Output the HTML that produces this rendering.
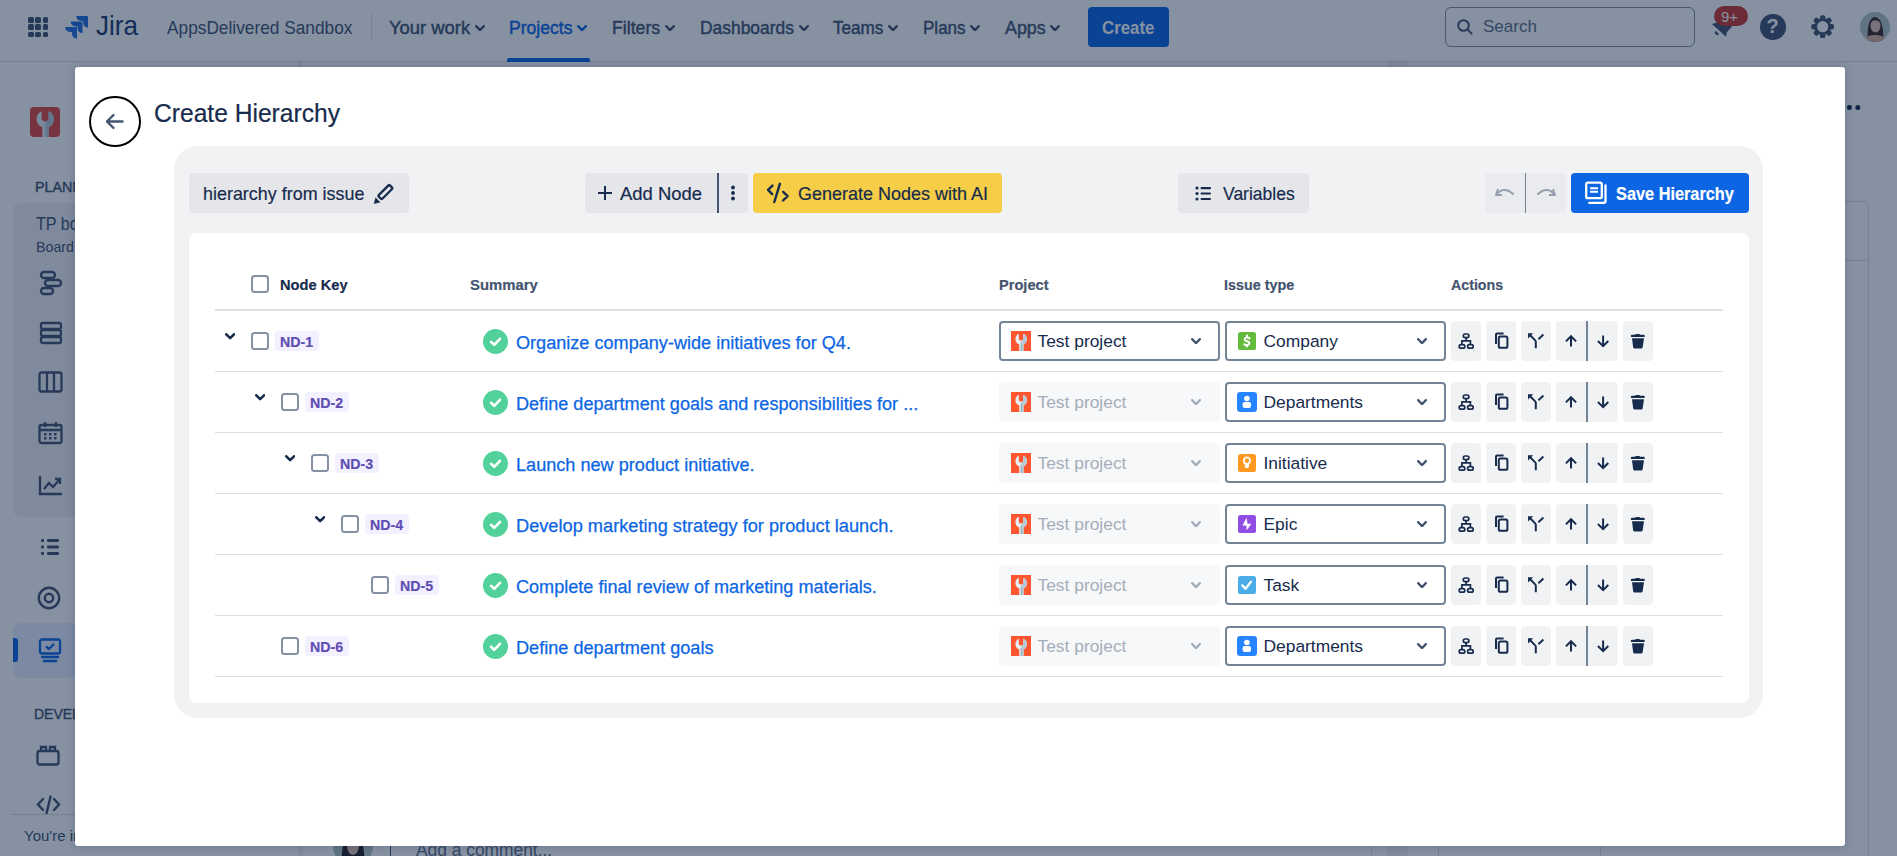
<!DOCTYPE html><html><head><meta charset="utf-8"><style>
html,body{margin:0;padding:0;width:1897px;height:856px;overflow:hidden;background:#fff;font-family:"Liberation Sans",sans-serif;}
.t{position:absolute;white-space:nowrap;line-height:1;transform-origin:0 0;-webkit-text-stroke-width:0.2px;}
.r{position:absolute;display:block;}
#bgp .t{-webkit-text-stroke-width:0;}
#ov{position:absolute;left:0;top:0;width:1897px;height:856px;background:rgba(9,30,66,0.49);}
</style></head><body>
<div id="bgp"><div class="r" style="left:0px;top:0px;width:1897px;height:61px;background:#ffffff;"></div>
<div class="r" style="left:0px;top:61px;width:1897px;height:1px;background:#dcdfe4;"></div>
<div class="r" style="left:28.0px;top:17.0px;width:5.5px;height:5.5px;background:#44546f;border-radius:1.5px;"></div>
<div class="r" style="left:28.0px;top:24.3px;width:5.5px;height:5.5px;background:#44546f;border-radius:1.5px;"></div>
<div class="r" style="left:28.0px;top:31.6px;width:5.5px;height:5.5px;background:#44546f;border-radius:1.5px;"></div>
<div class="r" style="left:35.3px;top:17.0px;width:5.5px;height:5.5px;background:#44546f;border-radius:1.5px;"></div>
<div class="r" style="left:35.3px;top:24.3px;width:5.5px;height:5.5px;background:#44546f;border-radius:1.5px;"></div>
<div class="r" style="left:35.3px;top:31.6px;width:5.5px;height:5.5px;background:#44546f;border-radius:1.5px;"></div>
<div class="r" style="left:42.6px;top:17.0px;width:5.5px;height:5.5px;background:#44546f;border-radius:1.5px;"></div>
<div class="r" style="left:42.6px;top:24.3px;width:5.5px;height:5.5px;background:#44546f;border-radius:1.5px;"></div>
<div class="r" style="left:42.6px;top:31.6px;width:5.5px;height:5.5px;background:#44546f;border-radius:1.5px;"></div>
<svg class="r" style="left:64.3px;top:15.2px;" width="25.5" height="25.5" viewBox="0 0 24 24"><path d="M22 1 H11.5 a4.6 4.6 0 0 0 4.6 4.6 h1.9 v1.8 a4.6 4.6 0 0 0 4.6 4.6 V2 a1 1 0 0 0 -0.6 -1z" fill="#2470e0"/>
<path d="M16.8 6.2 H6.3 a4.6 4.6 0 0 0 4.6 4.6 h1.9 v1.8 a4.6 4.6 0 0 0 4.6 4.6 V7.2 a1 1 0 0 0 -0.6 -1z" fill="#2470e0"/>
<path d="M11.6 11.4 H1.1 a4.6 4.6 0 0 0 4.6 4.6 h1.9 v1.8 a4.6 4.6 0 0 0 4.6 4.6 V12.4 a1 1 0 0 0 -0.6 -1z" fill="#2470e0"/></svg>
<div class="t" style="left:96px;top:12.30px;font-size:28px;color:#1e3a6e;transform:scaleX(0.93);">Jira</div>
<div class="t" style="left:167.13609953635776px;top:18.12px;font-size:19px;color:#44546f;transform:scaleX(0.9094);">AppsDelivered Sandbox</div>
<div class="r" style="left:371px;top:14px;width:1px;height:25px;background:#dcdfe4;"></div>
<div class="t" style="left:389.0796434628848px;top:18.12px;font-size:19px;color:#44546f;transform:scaleX(0.9688);-webkit-text-stroke:0.45px #44546f;">Your work</div>
<svg class="r" style="left:474.8px;top:24.7px;" width="10" height="6.6" viewBox="0 0 10 6.6"><path d="M1.25 1.25 L5.0 5.1 L8.75 1.25" fill="none" stroke="#44546f" stroke-width="2.5" stroke-linecap="round" stroke-linejoin="round"/></svg>
<div class="t" style="left:509.1224151277231px;top:18.12px;font-size:19px;color:#0c66e4;transform:scaleX(0.9238);-webkit-text-stroke:0.45px #0c66e4;">Projects</div>
<svg class="r" style="left:577px;top:24.7px;" width="10" height="6.6" viewBox="0 0 10 6.6"><path d="M1.25 1.25 L5.0 5.1 L8.75 1.25" fill="none" stroke="#0c66e4" stroke-width="2.5" stroke-linecap="round" stroke-linejoin="round"/></svg>
<div class="t" style="left:612.1143963809468px;top:18.12px;font-size:19px;color:#44546f;transform:scaleX(0.9322);-webkit-text-stroke:0.45px #44546f;">Filters</div>
<svg class="r" style="left:665px;top:24.7px;" width="10" height="6.6" viewBox="0 0 10 6.6"><path d="M1.25 1.25 L5.0 5.1 L8.75 1.25" fill="none" stroke="#44546f" stroke-width="2.5" stroke-linecap="round" stroke-linejoin="round"/></svg>
<div class="t" style="left:699.9293733547067px;top:18.12px;font-size:19px;color:#44546f;transform:scaleX(0.9164);-webkit-text-stroke:0.45px #44546f;">Dashboards</div>
<svg class="r" style="left:798.5px;top:24.7px;" width="10" height="6.6" viewBox="0 0 10 6.6"><path d="M1.25 1.25 L5.0 5.1 L8.75 1.25" fill="none" stroke="#44546f" stroke-width="2.5" stroke-linecap="round" stroke-linejoin="round"/></svg>
<div class="t" style="left:833.1449682362244px;top:18.12px;font-size:19px;color:#44546f;transform:scaleX(0.9);-webkit-text-stroke:0.45px #44546f;">Teams</div>
<svg class="r" style="left:888px;top:24.7px;" width="10" height="6.6" viewBox="0 0 10 6.6"><path d="M1.25 1.25 L5.0 5.1 L8.75 1.25" fill="none" stroke="#44546f" stroke-width="2.5" stroke-linecap="round" stroke-linejoin="round"/></svg>
<div class="t" style="left:922.9493095883339px;top:18.12px;font-size:19px;color:#44546f;transform:scaleX(0.8955);-webkit-text-stroke:0.45px #44546f;">Plans</div>
<svg class="r" style="left:970px;top:24.7px;" width="10" height="6.6" viewBox="0 0 10 6.6"><path d="M1.25 1.25 L5.0 5.1 L8.75 1.25" fill="none" stroke="#44546f" stroke-width="2.5" stroke-linecap="round" stroke-linejoin="round"/></svg>
<div class="t" style="left:1004.8065643648764px;top:18.12px;font-size:19px;color:#44546f;transform:scaleX(0.9405);-webkit-text-stroke:0.45px #44546f;">Apps</div>
<svg class="r" style="left:1050px;top:24.7px;" width="10" height="6.6" viewBox="0 0 10 6.6"><path d="M1.25 1.25 L5.0 5.1 L8.75 1.25" fill="none" stroke="#44546f" stroke-width="2.5" stroke-linecap="round" stroke-linejoin="round"/></svg>
<div class="r" style="left:507px;top:58px;width:83px;height:4px;background:#0c66e4;border-radius:2px 2px 0 0;"></div>
<div class="r" style="left:1088px;top:7px;width:81px;height:40px;background:#0c66e4;border-radius:4px;"></div>
<div class="t" style="left:1102.1592179490483px;top:17.92px;font-size:19px;color:#ffffff;font-weight:700;transform:scaleX(0.885);">Create</div>
<div class="r" style="left:1445px;top:7px;width:250px;height:40px;background:#ffffff;border:1.5px solid #8590a2;border-radius:6px;box-sizing:border-box;"></div>
<svg class="r" style="left:1457px;top:19px;" width="16" height="16" viewBox="0 0 16 16"><circle cx="6.5" cy="6.5" r="5.3" fill="none" stroke="#44546f" stroke-width="2"/><path d="M10.5 10.5 L14.6 14.6" stroke="#44546f" stroke-width="2" stroke-linecap="round"/></svg>
<div class="t" style="left:1483px;top:17.51px;font-size:17px;color:#626f86;">Search</div>
<svg class="r" style="left:1708px;top:10px;" width="30" height="32" viewBox="0 0 30 32"><g transform="rotate(42 15 16)"><path d="M15 4 C9.5 4 8 8.5 8 12 V18 L5.5 22 H24.5 L22 18 V12 C22 8.5 20.5 4 15 4z" fill="#44546f"/><path d="M12.5 24.5 a2.5 2.5 0 0 0 5 0z" fill="#44546f"/></g></svg>
<div class="r" style="left:1714px;top:6px;width:34px;height:20px;background:#c9372c;border-radius:10px;"></div>
<div class="t" style="left:1721px;top:9.30px;font-size:15px;color:#ffffff;">9+</div>
<div class="r" style="left:1760px;top:14px;width:25.5px;height:25.5px;background:#44546f;border-radius:50%;"></div>
<div class="t" style="left:1766.5px;top:16.07px;font-size:20px;color:#ffffff;font-weight:700;">?</div>
<svg class="r" style="left:1811px;top:15px;" width="23.4" height="23.4" viewBox="0 0 23.4 23.4"><rect x="9" y="0.3" width="5.4" height="6" rx="2.2" fill="#44546f" transform="rotate(0 11.7 11.7)"/><rect x="9" y="0.3" width="5.4" height="6" rx="2.2" fill="#44546f" transform="rotate(45 11.7 11.7)"/><rect x="9" y="0.3" width="5.4" height="6" rx="2.2" fill="#44546f" transform="rotate(90 11.7 11.7)"/><rect x="9" y="0.3" width="5.4" height="6" rx="2.2" fill="#44546f" transform="rotate(135 11.7 11.7)"/><rect x="9" y="0.3" width="5.4" height="6" rx="2.2" fill="#44546f" transform="rotate(180 11.7 11.7)"/><rect x="9" y="0.3" width="5.4" height="6" rx="2.2" fill="#44546f" transform="rotate(225 11.7 11.7)"/><rect x="9" y="0.3" width="5.4" height="6" rx="2.2" fill="#44546f" transform="rotate(270 11.7 11.7)"/><rect x="9" y="0.3" width="5.4" height="6" rx="2.2" fill="#44546f" transform="rotate(315 11.7 11.7)"/><circle cx="11.7" cy="11.7" r="8.1" fill="#44546f"/><circle cx="11.7" cy="11.7" r="5.6" fill="#fff"/></svg>
<svg class="r" style="left:1860px;top:12px;" width="30" height="30" viewBox="0 0 30 30"><defs><clipPath id="av"><circle cx="15" cy="15" r="15"/></clipPath></defs><g clip-path="url(#av)"><rect width="30" height="30" fill="#b5c7c4"/><path d="M8 30 C7 18 8 6 15 5 C22 6 24 18 23 30z" fill="#3b2a26"/><ellipse cx="15.5" cy="14" rx="5" ry="6.5" fill="#e8c3b0"/><path d="M4 30 C6 24 10 23 15 23 C20 23 25 24 27 30z" fill="#dcae98"/><path d="M10 10 C12 5 19 5 21 10 C19 8 12 8 10 10z" fill="#3b2a26"/></g></svg>
<div class="r" style="left:299px;top:62px;width:4px;height:800px;background:#f1f2f4;"></div>
<div class="r" style="left:298px;top:62px;width:1px;height:800px;background:#ebecf0;"></div>
<svg class="r" style="left:30px;top:107px;" width="30" height="30" viewBox="0 0 20 20"><defs><clipPath id="sbw"><rect x="0" y="0" width="20" height="20" rx="2.7"/></clipPath><clipPath id="sbr"><rect x="10.2" y="0" width="10" height="20"/></clipPath></defs><g clip-path="url(#sbw)"><rect width="20" height="20" fill="#e2483d"/><path d="M7.8 2.8 C5.4 3.8 4.4 6 4.4 8.2 C4.4 10.8 6.1 12.6 8.2 13.5 V20 H12.5 V13.5 C14.6 12.6 15.9 10.8 15.9 8.2 C15.9 6 14.9 3.8 12.4 2.8 V8.6 L10.1 9.8 L7.8 8.6 Z" fill="#e6f0f4"/><path d="M7.8 2.8 C5.4 3.8 4.4 6 4.4 8.2 C4.4 10.8 6.1 12.6 8.2 13.5 V20 H12.5 V13.5 C14.6 12.6 15.9 10.8 15.9 8.2 C15.9 6 14.9 3.8 12.4 2.8 V8.6 L10.1 9.8 L7.8 8.6 Z" fill="#b6cad5" clip-path="url(#sbr)"/></g></svg>
<div class="t" style="left:34.5px;top:178.88px;font-size:15.5px;color:#44546f;transform:scaleX(0.92);-webkit-text-stroke:0.4px #44546f;">PLANNING</div>
<div class="r" style="left:13px;top:203px;width:300px;height:314px;background:#f1f2f4;border-radius:8px;"></div>
<div class="t" style="left:35.5px;top:215.34px;font-size:18.5px;color:#44546f;transform:scaleX(0.87);">TP board</div>
<div class="t" style="left:35.5px;top:239.00px;font-size:15px;color:#44546f;transform:scaleX(0.95);">Board</div>
<svg class="r" style="left:39px;top:270px;" width="24" height="26" viewBox="0 0 24 26"><rect x="2" y="2" width="14" height="6" rx="3" fill="none" stroke="#44546f" stroke-width="2.3"/><rect x="6" y="10" width="16" height="6" rx="3" fill="none" stroke="#44546f" stroke-width="2.3"/><rect x="2" y="18" width="12" height="6" rx="3" fill="none" stroke="#44546f" stroke-width="2.3"/></svg>
<svg class="r" style="left:39px;top:321px;" width="24" height="24" viewBox="0 0 24 24"><rect x="2" y="2" width="20" height="6" rx="2" fill="none" stroke="#44546f" stroke-width="2.3"/><rect x="2" y="9" width="20" height="6" rx="2" fill="none" stroke="#44546f" stroke-width="2.3"/><rect x="2" y="16" width="20" height="6" rx="2" fill="none" stroke="#44546f" stroke-width="2.3"/></svg>
<svg class="r" style="left:38px;top:371px;" width="25" height="22" viewBox="0 0 25 22"><rect x="1.5" y="1.5" width="22" height="19" rx="2" fill="none" stroke="#44546f" stroke-width="2.3"/><path d="M9 2 v18 M16 2 v18" stroke="#44546f" stroke-width="2.3"/></svg>
<svg class="r" style="left:38px;top:421px;" width="25" height="24" viewBox="0 0 25 24"><rect x="1.5" y="4" width="22" height="18" rx="2" fill="none" stroke="#44546f" stroke-width="2.3"/><path d="M1.5 9 h22 M7 1 v5 M18 1 v5" stroke="#44546f" stroke-width="2.3"/><g fill="#44546f"><rect x="6" y="12" width="2.5" height="2.5"/><rect x="11" y="12" width="2.5" height="2.5"/><rect x="16" y="12" width="2.5" height="2.5"/><rect x="6" y="16" width="2.5" height="2.5"/><rect x="11" y="16" width="2.5" height="2.5"/><rect x="16" y="16" width="2.5" height="2.5"/></g></svg>
<svg class="r" style="left:38px;top:474px;" width="26" height="22" viewBox="0 0 26 22"><path d="M2 2 v18 h22" fill="none" stroke="#44546f" stroke-width="2.3"/><path d="M6 15 l5 -6 l4 4 l7 -8 M17 5 h5 v5" fill="none" stroke="#44546f" stroke-width="2.3"/></svg>
<svg class="r" style="left:40px;top:538px;" width="20" height="18" viewBox="0 0 20 18"><g fill="#44546f"><rect x="1" y="1" width="3" height="3" rx="1"/><rect x="1" y="7.5" width="3" height="3" rx="1"/><rect x="1" y="14" width="3" height="3" rx="1"/><rect x="7" y="1" width="12" height="3" rx="1.2"/><rect x="7" y="7.5" width="12" height="3" rx="1.2"/><rect x="7" y="14" width="12" height="3" rx="1.2"/></g></svg>
<svg class="r" style="left:37px;top:586px;" width="24" height="24" viewBox="0 0 24 24"><circle cx="12" cy="12" r="10.2" fill="none" stroke="#44546f" stroke-width="2.4"/><circle cx="12" cy="12" r="4.2" fill="none" stroke="#44546f" stroke-width="2.4"/></svg>
<div class="r" style="left:13px;top:623px;width:300px;height:55px;background:#e9f2ff;border-radius:8px;"></div>
<div class="r" style="left:13px;top:638px;width:5px;height:24px;background:#0c66e4;border-radius:0 3px 3px 0;"></div>
<svg class="r" style="left:38px;top:638px;" width="24" height="25" viewBox="0 0 24 25"><rect x="2" y="1.5" width="20" height="14" rx="2" fill="none" stroke="#0c66e4" stroke-width="2.3"/><path d="M8 8.5 l3 2.5 l5 -5" fill="none" stroke="#0c66e4" stroke-width="2.3"/><path d="M3 19 h18 M5 23 h14" stroke="#0c66e4" stroke-width="2.3"/></svg>
<div class="t" style="left:33.5px;top:705.88px;font-size:15.5px;color:#44546f;transform:scaleX(0.9);-webkit-text-stroke:0.4px #44546f;">DEVELOPMENT</div>
<svg class="r" style="left:36px;top:745px;" width="24" height="21" viewBox="0 0 24 21"><rect x="1.5" y="6" width="21" height="13.5" rx="2" fill="none" stroke="#44546f" stroke-width="2.3"/><path d="M5 6 v-4 h5 v4 M14 6 v-4 h5 v4" fill="none" stroke="#44546f" stroke-width="2.3"/></svg>
<svg class="r" style="left:36px;top:795px;" width="25" height="20" viewBox="0 0 25 20"><path d="M7 4 L2 9.5 L7 15 M18 4 L23 9.5 L18 15 M14.5 1.5 L10.5 18.5" fill="none" stroke="#44546f" stroke-width="2.4" stroke-linecap="round"/></svg>
<div class="r" style="left:10px;top:814px;width:290px;height:1px;background:#dcdfe4;"></div>
<div class="t" style="left:24px;top:828.30px;font-size:15px;color:#44546f;">You're in a team-managed project</div>
<div class="r" style="left:1387px;top:62px;width:21px;height:800px;background:#f1f2f4;"></div>
<div class="r" style="left:1371px;top:830px;width:1px;height:30px;background:#dcdfe4;"></div>
<div class="r" style="left:1438px;top:830px;width:1px;height:30px;background:#dcdfe4;"></div>
<svg class="r" style="left:1836px;top:103px;" width="26" height="9" viewBox="0 0 26 9"><circle cx="5" cy="4.5" r="2.5" fill="#172b4d"/><circle cx="13.4" cy="4.5" r="2.5" fill="#172b4d"/><circle cx="21.8" cy="4.5" r="2.5" fill="#172b4d"/></svg>
<div class="r" style="left:1600px;top:201px;width:269px;height:700px;background:#ffffff;border:1px solid #dcdfe4;border-radius:4px;box-sizing:border-box;"></div>
<div class="r" style="left:1600px;top:260px;width:269px;height:1px;background:#dcdfe4;"></div>
<svg class="r" style="left:333px;top:826px;" width="40" height="40" viewBox="0 0 40 40"><defs><clipPath id="av2"><circle cx="20" cy="20" r="20"/></clipPath></defs><g clip-path="url(#av2)"><rect width="40" height="40" fill="#b5c7c4"/><path d="M9 40 C8 25 10 8 20 7 C30 8 32 25 31 40z" fill="#2a2024"/><ellipse cx="20" cy="20" rx="6" ry="9" fill="#e2c0b0"/></g></svg>
<div class="r" style="left:390px;top:830px;width:1px;height:30px;background:#44546f;"></div>
<div class="t" style="left:415.73111088729985px;top:840.76px;font-size:18px;color:#626f86;transform:scaleX(0.9654);">Add a comment...</div>
</div><div id="ov"></div>
<div class="r" style="left:75px;top:67px;width:1770px;height:779px;background:#ffffff;border-radius:3px;box-shadow:0 0 9px rgba(9,30,66,0.22);"></div>
<div class="r" style="left:89px;top:95.8px;width:51.6px;height:51.6px;background:transparent;border:2px solid #000;border-radius:50%;box-sizing:border-box;"></div>
<svg class="r" style="left:104px;top:112px;" width="21" height="19" viewBox="0 0 21 19"><path d="M18.5 9.5 H3 M9.5 3 L3 9.5 L9.5 16" fill="none" stroke="#44546f" stroke-width="2.4" stroke-linecap="round" stroke-linejoin="round"/></svg>
<div class="t" style="left:154.4697836465635px;top:99.99px;font-size:26px;color:#172b4d;transform:scaleX(0.9463);">Create Hierarchy</div>
<div class="r" style="left:174px;top:146px;width:1589px;height:572px;background:#f1f2f4;border-radius:24px;"></div>
<div class="r" style="left:189px;top:173px;width:220px;height:40px;background:#e4e6ea;border-radius:4px;"></div>
<div class="t" style="left:203.10346095589975px;top:183.92px;font-size:19px;color:#172b4d;transform:scaleX(0.9437);">hierarchy from issue</div>
<svg class="r" style="left:365px;top:176px;" width="40" height="34" viewBox="0 0 40 34"><rect x="12.5" y="13.55" width="15.8" height="5.1" rx="1" fill="none" stroke="#172b4d" stroke-width="2.3" transform="rotate(-45 20.4 16.1)"/><path d="M9.1 27.6 L10.6 21.8 L15 26.2z" fill="#172b4d" stroke="#172b4d" stroke-width="0.5" stroke-linejoin="round"/></svg>
<div class="r" style="left:585px;top:173px;width:163px;height:40px;background:#e4e6ea;border-radius:4px;"></div>
<div class="r" style="left:717px;top:173px;width:1.5px;height:40px;background:#44546f;"></div>
<svg class="r" style="left:597px;top:185px;" width="16" height="16" viewBox="0 0 16 16"><path d="M8 1 V15 M1 8 H15" stroke="#172b4d" stroke-width="2"/></svg>
<div class="t" style="left:619.5773578493623px;top:183.92px;font-size:19px;color:#172b4d;transform:scaleX(0.9712);">Add Node</div>
<svg class="r" style="left:729px;top:185px;" width="8" height="16" viewBox="0 0 8 16"><circle cx="4" cy="2.5" r="1.9" fill="#172b4d"/><circle cx="4" cy="8" r="1.9" fill="#172b4d"/><circle cx="4" cy="13.5" r="1.9" fill="#172b4d"/></svg>
<div class="r" style="left:753px;top:173px;width:249px;height:40px;background:#f5cd47;border-radius:4px;"></div>
<svg class="r" style="left:766px;top:181px;" width="24" height="24" viewBox="0 0 24 24"><path d="M6.5 4.6 L2 8.9 L6.2 13.2 M17.2 10.9 L21.6 15.1 L17 19.5 M13.9 2.8 L8.3 21" fill="none" stroke="#172b4d" stroke-width="2.4" stroke-linecap="round" stroke-linejoin="round"/></svg>
<div class="t" style="left:797.5003383867746px;top:183.92px;font-size:19px;color:#172b4d;transform:scaleX(0.947);">Generate Nodes with AI</div>
<div class="r" style="left:1178px;top:173px;width:131px;height:40px;background:#e4e6ea;border-radius:4px;"></div>
<svg class="r" style="left:1195px;top:185.7px;" width="17" height="15" viewBox="0 0 17 15"><g fill="#172b4d"><circle cx="2" cy="2" r="1.6"/><circle cx="2" cy="7.5" r="1.6"/><circle cx="2" cy="13" r="1.6"/><rect x="5.5" y="1" width="10.5" height="2.2" rx="1"/><rect x="5.5" y="6.4" width="10.5" height="2.2" rx="1"/><rect x="5.5" y="11.9" width="10.5" height="2.2" rx="1"/></g></svg>
<div class="t" style="left:1222.6245159658306px;top:183.92px;font-size:19px;color:#172b4d;transform:scaleX(0.9216);">Variables</div>
<div class="r" style="left:1485px;top:173px;width:81px;height:40px;background:#e9ebee;border-radius:4px;"></div>
<div class="r" style="left:1525px;top:173px;width:1.2px;height:40px;background:#738496;"></div>
<svg class="r" style="left:1494px;top:185px;" width="22" height="14" viewBox="0 0 22 14"><path d="M4 4 L2 10 L8 10" fill="none" stroke="#97a0af" stroke-width="2" stroke-linejoin="round"/><path d="M3 9.5 C6 4 13 3 19 9" fill="none" stroke="#97a0af" stroke-width="2" stroke-linecap="round"/></svg>
<svg class="r" style="left:1535px;top:185px;" width="22" height="14" viewBox="0 0 22 14"><path d="M18 4 L20 10 L14 10" fill="none" stroke="#97a0af" stroke-width="2" stroke-linejoin="round"/><path d="M19 9.5 C16 4 9 3 3 9" fill="none" stroke="#97a0af" stroke-width="2" stroke-linecap="round"/></svg>
<div class="r" style="left:1571px;top:173px;width:178px;height:40px;background:#0c66e4;border-radius:4px;"></div>
<svg class="r" style="left:1584px;top:180px;" width="26" height="26" viewBox="0 0 26 26"><rect x="2.2" y="2.6" width="15.6" height="15.6" rx="1.8" fill="none" stroke="#fff" stroke-width="2.3"/><path d="M6 8.2 H14 M6 11.8 H14" stroke="#fff" stroke-width="2.1"/><path d="M21.5 5.4 V21 a1.8 1.8 0 0 1 -1.8 1.8 H5.2" fill="none" stroke="#fff" stroke-width="2.3" stroke-linecap="round"/></svg>
<div class="t" style="left:1616.1842945214464px;top:183.92px;font-size:19px;color:#ffffff;font-weight:700;transform:scaleX(0.8586);">Save Hierarchy</div>
<div class="r" style="left:189px;top:233px;width:1560px;height:470px;background:#ffffff;border-radius:7px;"></div>
<div class="r" style="left:251px;top:275px;width:18px;height:18px;background:#fff;border:2.4px solid #8590a2;border-radius:3.5px;box-sizing:border-box;"></div>
<div class="t" style="left:279.7674997845385px;top:277.26px;font-size:15.4px;color:#172b4d;font-weight:700;transform:scaleX(0.9513);">Node Key</div>
<div class="t" style="left:470.25630735945845px;top:277.26px;font-size:15.4px;color:#44546f;font-weight:700;transform:scaleX(0.9658);">Summary</div>
<div class="t" style="left:998.568933940667px;top:277.26px;font-size:15.4px;color:#44546f;font-weight:700;transform:scaleX(0.9494);">Project</div>
<div class="t" style="left:1224.2829306313329px;top:277.26px;font-size:15.4px;color:#44546f;font-weight:700;transform:scaleX(0.9313);">Issue type</div>
<div class="t" style="left:1451.2891212022214px;top:277.26px;font-size:15.4px;color:#44546f;font-weight:700;transform:scaleX(0.9232);">Actions</div>
<div class="r" style="left:215px;top:309px;width:1508px;height:2px;background:#dcdfe4;"></div>
<div class="r" style="left:215px;top:371px;width:1508px;height:1px;background:#dcdfe4;"></div>
<svg class="r" style="left:224.8px;top:333.2px;" width="10.3" height="6.7" viewBox="0 0 10.3 6.7"><path d="M1.3 1.3 L5.15 5.140000000000001 L9.0 1.3" fill="none" stroke="#172b4d" stroke-width="2.6" stroke-linecap="round" stroke-linejoin="round"/></svg>
<div class="r" style="left:251px;top:332px;width:18px;height:18px;background:#fff;border:2.4px solid #8590a2;border-radius:3.5px;box-sizing:border-box;"></div>
<div class="r" style="left:275px;top:331px;width:44px;height:20px;background:#f3f0ff;border-radius:3.5px;"></div>
<div class="t" style="left:280.09224155862165px;top:334.73px;font-size:14.5px;color:#5e4db2;font-weight:700;transform:scaleX(0.9762);">ND-1</div>
<svg class="r" style="left:483.2px;top:329.4px;" width="25" height="25" viewBox="0 0 25 25"><circle cx="12.5" cy="12.5" r="12.5" fill="#52d29a"/><path d="M8 12.8 L11.2 15.8 L17 9.8" fill="none" stroke="#fff" stroke-width="2.6" stroke-linecap="round" stroke-linejoin="round"/></svg>
<div class="t" style="left:516.0951369546509px;top:334.36px;font-size:18px;color:#0c66e4;transform:scaleX(1.0054);-webkit-text-stroke:0.25px #0c66e4;">Organize company-wide initiatives for Q4.</div>
<div class="r" style="left:999px;top:321px;width:221px;height:40px;background:#fff;border:2px solid #738496;border-radius:4px;box-sizing:border-box;"></div>
<svg class="r" style="left:1011px;top:331px;" width="20" height="20" viewBox="0 0 20 20"><defs><clipPath id="pc1"><rect x="10.2" y="0" width="10" height="20"/></clipPath></defs><rect width="20" height="20" fill="#ff5630"/><path d="M7.8 2.8 C5.4 3.8 4.4 6 4.4 8.2 C4.4 10.8 6.1 12.6 8.2 13.5 V20 H12.5 V13.5 C14.6 12.6 15.9 10.8 15.9 8.2 C15.9 6 14.9 3.8 12.4 2.8 V8.6 L10.1 9.8 L7.8 8.6 Z" fill="#e6f0f4"/><path d="M7.8 2.8 C5.4 3.8 4.4 6 4.4 8.2 C4.4 10.8 6.1 12.6 8.2 13.5 V20 H12.5 V13.5 C14.6 12.6 15.9 10.8 15.9 8.2 C15.9 6 14.9 3.8 12.4 2.8 V8.6 L10.1 9.8 L7.8 8.6 Z" fill="#b6cad5" clip-path="url(#pc1)"/><rect x="9.6" y="12" width="1.4" height="8" fill="#9fb3c0"/></svg>
<div class="t" style="left:1037.5px;top:332.77px;font-size:17.4px;color:#172b4d;-webkit-text-stroke-width:0;">Test project</div>
<svg class="r" style="left:1191px;top:337.8px;" width="10" height="6.6" viewBox="0 0 10 6.6"><path d="M1.15 1.15 L5.0 5.22 L8.85 1.15" fill="none" stroke="#44546f" stroke-width="2.3" stroke-linecap="round" stroke-linejoin="round"/></svg>
<div class="r" style="left:1225px;top:321px;width:221px;height:40px;background:#fff;border:2px solid #738496;border-radius:4px;box-sizing:border-box;"></div>
<svg class="r" style="left:1238px;top:332px;" width="18" height="18" viewBox="0 0 18 18"><rect width="18" height="18" rx="2.6" fill="#63ba3c"/><path d="M9 3.6 V5.2 M9 13 V14.6 M11.6 6.4 C10.6 5.2 6.8 5.1 6.6 7.3 C6.4 9.6 11.6 8.9 11.4 11.4 C11.2 13.6 7.6 13.6 6.3 12.3" fill="none" stroke="#fff" stroke-width="2" stroke-linecap="round"/></svg>
<div class="t" style="left:1263.5px;top:332.77px;font-size:17.4px;color:#172b4d;-webkit-text-stroke-width:0;">Company</div>
<svg class="r" style="left:1417px;top:337.8px;" width="10" height="6.6" viewBox="0 0 10 6.6"><path d="M1.15 1.15 L5.0 5.22 L8.85 1.15" fill="none" stroke="#44546f" stroke-width="2.3" stroke-linecap="round" stroke-linejoin="round"/></svg>
<div class="r" style="left:1451px;top:321px;width:30px;height:40px;background:#f1f2f4;border-radius:4px;"></div>
<div class="r" style="left:1486px;top:321px;width:30px;height:40px;background:#f1f2f4;border-radius:4px;"></div>
<div class="r" style="left:1521px;top:321px;width:30px;height:40px;background:#f1f2f4;border-radius:4px;"></div>
<div class="r" style="left:1556px;top:321px;width:62px;height:40px;background:#f1f2f4;border-radius:4px;"></div>
<div class="r" style="left:1586px;top:321px;width:2px;height:40px;background:#738496;"></div>
<div class="r" style="left:1623px;top:321px;width:30px;height:40px;background:#f1f2f4;border-radius:4px;"></div>
<svg class="r" style="left:1451px;top:321px;" width="30" height="40" viewBox="0 0 30 40"><g fill="none" stroke="#172b4d" stroke-width="1.7"><rect x="12.3" y="13" width="5.6" height="3.6" rx="1.8"/><path d="M15.1 16.6 V19.9 M10.9 23.5 V19.9 H19.4 V23.5"/><rect x="8.2" y="23.6" width="5.6" height="3.6" rx="1.8"/><rect x="16.6" y="23.6" width="5.6" height="3.6" rx="1.8"/></g></svg>
<svg class="r" style="left:1486px;top:321px;" width="30" height="40" viewBox="0 0 30 40"><g fill="none" stroke="#172b4d" stroke-width="2"><path d="M10 23 V13.6 a1 1 0 0 1 1 -1 H17.6"/><rect x="12.8" y="15.6" width="8.6" height="11.2" rx="1.6"/></g></svg>
<svg class="r" style="left:1521px;top:321px;" width="30" height="40" viewBox="0 0 30 40"><g fill="none" stroke="#172b4d" stroke-width="2"><path d="M8.2 13.2 L14.2 19.4 a2 2 0 0 1 0.6 1.4 V27.2"/><path d="M17.4 18.2 L22.4 13.6"/></g><path d="M7 12.2 H12.2 L7 17.4z" fill="#172b4d"/></svg>
<svg class="r" style="left:1556px;top:321px;" width="30" height="40" viewBox="0 0 30 40"><path d="M15 15.6 V25.4 M9.9 20.4 L15 15.2 L20.1 20.4" fill="none" stroke="#172b4d" stroke-width="2"/></svg>
<svg class="r" style="left:1588px;top:321px;" width="30" height="40" viewBox="0 0 30 40"><path d="M15.1 14.6 V25 M9.9 20 L15.1 25.2 L20.3 20" fill="none" stroke="#172b4d" stroke-width="2"/></svg>
<svg class="r" style="left:1623px;top:321px;" width="30" height="40" viewBox="0 0 30 40"><g fill="#172b4d"><rect x="7.8" y="13.7" width="14" height="2.4" rx="1.2"/><rect x="12.2" y="12.9" width="4.8" height="2" rx="1"/><path d="M9 17.2 H21 L19.6 26.6 a1 1 0 0 1 -1 0.8 H11.2 a1 1 0 0 1 -1 -0.8z"/></g></svg>
<div class="r" style="left:215px;top:432px;width:1508px;height:1px;background:#dcdfe4;"></div>
<svg class="r" style="left:254.8px;top:394.2px;" width="10.3" height="6.7" viewBox="0 0 10.3 6.7"><path d="M1.3 1.3 L5.15 5.140000000000001 L9.0 1.3" fill="none" stroke="#172b4d" stroke-width="2.6" stroke-linecap="round" stroke-linejoin="round"/></svg>
<div class="r" style="left:281px;top:393px;width:18px;height:18px;background:#fff;border:2.4px solid #8590a2;border-radius:3.5px;box-sizing:border-box;"></div>
<div class="r" style="left:305px;top:392px;width:44px;height:20px;background:#f3f0ff;border-radius:3.5px;"></div>
<div class="t" style="left:310.09224155862165px;top:395.73px;font-size:14.5px;color:#5e4db2;font-weight:700;transform:scaleX(0.9762);">ND-2</div>
<svg class="r" style="left:483.2px;top:390.4px;" width="25" height="25" viewBox="0 0 25 25"><circle cx="12.5" cy="12.5" r="12.5" fill="#52d29a"/><path d="M8 12.8 L11.2 15.8 L17 9.8" fill="none" stroke="#fff" stroke-width="2.6" stroke-linecap="round" stroke-linejoin="round"/></svg>
<div class="t" style="left:516.0954573985655px;top:395.36px;font-size:18px;color:#0c66e4;transform:scaleX(1.005);-webkit-text-stroke:0.25px #0c66e4;">Define department goals and responsibilities for ...</div>
<div class="r" style="left:999px;top:382px;width:221px;height:40px;background:#f7f8f9;border-radius:4px;"></div>
<svg class="r" style="left:1011px;top:392px;" width="20" height="20" viewBox="0 0 20 20"><defs><clipPath id="pc2"><rect x="10.2" y="0" width="10" height="20"/></clipPath></defs><rect width="20" height="20" fill="#ff5630"/><path d="M7.8 2.8 C5.4 3.8 4.4 6 4.4 8.2 C4.4 10.8 6.1 12.6 8.2 13.5 V20 H12.5 V13.5 C14.6 12.6 15.9 10.8 15.9 8.2 C15.9 6 14.9 3.8 12.4 2.8 V8.6 L10.1 9.8 L7.8 8.6 Z" fill="#e6f0f4"/><path d="M7.8 2.8 C5.4 3.8 4.4 6 4.4 8.2 C4.4 10.8 6.1 12.6 8.2 13.5 V20 H12.5 V13.5 C14.6 12.6 15.9 10.8 15.9 8.2 C15.9 6 14.9 3.8 12.4 2.8 V8.6 L10.1 9.8 L7.8 8.6 Z" fill="#b6cad5" clip-path="url(#pc2)"/><rect x="9.6" y="12" width="1.4" height="8" fill="#9fb3c0"/></svg>
<div class="t" style="left:1037.5px;top:393.77px;font-size:17.4px;color:#a5adba;-webkit-text-stroke-width:0;">Test project</div>
<svg class="r" style="left:1191px;top:398.8px;" width="10" height="6.6" viewBox="0 0 10 6.6"><path d="M1.15 1.15 L5.0 5.22 L8.85 1.15" fill="none" stroke="#a5adba" stroke-width="2.3" stroke-linecap="round" stroke-linejoin="round"/></svg>
<div class="r" style="left:1225px;top:382px;width:221px;height:40px;background:#fff;border:2px solid #738496;border-radius:4px;box-sizing:border-box;"></div>
<svg class="r" style="left:1237px;top:392px;" width="20" height="20" viewBox="0 0 20 20"><rect width="20" height="20" rx="3.2" fill="#2684ff"/><circle cx="9.9" cy="6.5" r="2.8" fill="#fff"/><rect x="5.6" y="9.9" width="8.4" height="6.2" rx="2" fill="#fff"/></svg>
<div class="t" style="left:1263.5px;top:393.77px;font-size:17.4px;color:#172b4d;-webkit-text-stroke-width:0;">Departments</div>
<svg class="r" style="left:1417px;top:398.8px;" width="10" height="6.6" viewBox="0 0 10 6.6"><path d="M1.15 1.15 L5.0 5.22 L8.85 1.15" fill="none" stroke="#44546f" stroke-width="2.3" stroke-linecap="round" stroke-linejoin="round"/></svg>
<div class="r" style="left:1451px;top:382px;width:30px;height:40px;background:#f1f2f4;border-radius:4px;"></div>
<div class="r" style="left:1486px;top:382px;width:30px;height:40px;background:#f1f2f4;border-radius:4px;"></div>
<div class="r" style="left:1521px;top:382px;width:30px;height:40px;background:#f1f2f4;border-radius:4px;"></div>
<div class="r" style="left:1556px;top:382px;width:62px;height:40px;background:#f1f2f4;border-radius:4px;"></div>
<div class="r" style="left:1586px;top:382px;width:2px;height:40px;background:#738496;"></div>
<div class="r" style="left:1623px;top:382px;width:30px;height:40px;background:#f1f2f4;border-radius:4px;"></div>
<svg class="r" style="left:1451px;top:382px;" width="30" height="40" viewBox="0 0 30 40"><g fill="none" stroke="#172b4d" stroke-width="1.7"><rect x="12.3" y="13" width="5.6" height="3.6" rx="1.8"/><path d="M15.1 16.6 V19.9 M10.9 23.5 V19.9 H19.4 V23.5"/><rect x="8.2" y="23.6" width="5.6" height="3.6" rx="1.8"/><rect x="16.6" y="23.6" width="5.6" height="3.6" rx="1.8"/></g></svg>
<svg class="r" style="left:1486px;top:382px;" width="30" height="40" viewBox="0 0 30 40"><g fill="none" stroke="#172b4d" stroke-width="2"><path d="M10 23 V13.6 a1 1 0 0 1 1 -1 H17.6"/><rect x="12.8" y="15.6" width="8.6" height="11.2" rx="1.6"/></g></svg>
<svg class="r" style="left:1521px;top:382px;" width="30" height="40" viewBox="0 0 30 40"><g fill="none" stroke="#172b4d" stroke-width="2"><path d="M8.2 13.2 L14.2 19.4 a2 2 0 0 1 0.6 1.4 V27.2"/><path d="M17.4 18.2 L22.4 13.6"/></g><path d="M7 12.2 H12.2 L7 17.4z" fill="#172b4d"/></svg>
<svg class="r" style="left:1556px;top:382px;" width="30" height="40" viewBox="0 0 30 40"><path d="M15 15.6 V25.4 M9.9 20.4 L15 15.2 L20.1 20.4" fill="none" stroke="#172b4d" stroke-width="2"/></svg>
<svg class="r" style="left:1588px;top:382px;" width="30" height="40" viewBox="0 0 30 40"><path d="M15.1 14.6 V25 M9.9 20 L15.1 25.2 L20.3 20" fill="none" stroke="#172b4d" stroke-width="2"/></svg>
<svg class="r" style="left:1623px;top:382px;" width="30" height="40" viewBox="0 0 30 40"><g fill="#172b4d"><rect x="7.8" y="13.7" width="14" height="2.4" rx="1.2"/><rect x="12.2" y="12.9" width="4.8" height="2" rx="1"/><path d="M9 17.2 H21 L19.6 26.6 a1 1 0 0 1 -1 0.8 H11.2 a1 1 0 0 1 -1 -0.8z"/></g></svg>
<div class="r" style="left:215px;top:493px;width:1508px;height:1px;background:#dcdfe4;"></div>
<svg class="r" style="left:284.8px;top:455.2px;" width="10.3" height="6.7" viewBox="0 0 10.3 6.7"><path d="M1.3 1.3 L5.15 5.140000000000001 L9.0 1.3" fill="none" stroke="#172b4d" stroke-width="2.6" stroke-linecap="round" stroke-linejoin="round"/></svg>
<div class="r" style="left:311px;top:454px;width:18px;height:18px;background:#fff;border:2.4px solid #8590a2;border-radius:3.5px;box-sizing:border-box;"></div>
<div class="r" style="left:335px;top:453px;width:44px;height:20px;background:#f3f0ff;border-radius:3.5px;"></div>
<div class="t" style="left:340.09224155862165px;top:456.73px;font-size:14.5px;color:#5e4db2;font-weight:700;transform:scaleX(0.9762);">ND-3</div>
<svg class="r" style="left:483.2px;top:451.4px;" width="25" height="25" viewBox="0 0 25 25"><circle cx="12.5" cy="12.5" r="12.5" fill="#52d29a"/><path d="M8 12.8 L11.2 15.8 L17 9.8" fill="none" stroke="#fff" stroke-width="2.6" stroke-linecap="round" stroke-linejoin="round"/></svg>
<div class="t" style="left:516.0943162089765px;top:456.36px;font-size:18px;color:#0c66e4;transform:scaleX(1.0063);-webkit-text-stroke:0.25px #0c66e4;">Launch new product initiative.</div>
<div class="r" style="left:999px;top:443px;width:221px;height:40px;background:#f7f8f9;border-radius:4px;"></div>
<svg class="r" style="left:1011px;top:453px;" width="20" height="20" viewBox="0 0 20 20"><defs><clipPath id="pc3"><rect x="10.2" y="0" width="10" height="20"/></clipPath></defs><rect width="20" height="20" fill="#ff5630"/><path d="M7.8 2.8 C5.4 3.8 4.4 6 4.4 8.2 C4.4 10.8 6.1 12.6 8.2 13.5 V20 H12.5 V13.5 C14.6 12.6 15.9 10.8 15.9 8.2 C15.9 6 14.9 3.8 12.4 2.8 V8.6 L10.1 9.8 L7.8 8.6 Z" fill="#e6f0f4"/><path d="M7.8 2.8 C5.4 3.8 4.4 6 4.4 8.2 C4.4 10.8 6.1 12.6 8.2 13.5 V20 H12.5 V13.5 C14.6 12.6 15.9 10.8 15.9 8.2 C15.9 6 14.9 3.8 12.4 2.8 V8.6 L10.1 9.8 L7.8 8.6 Z" fill="#b6cad5" clip-path="url(#pc3)"/><rect x="9.6" y="12" width="1.4" height="8" fill="#9fb3c0"/></svg>
<div class="t" style="left:1037.5px;top:454.77px;font-size:17.4px;color:#a5adba;-webkit-text-stroke-width:0;">Test project</div>
<svg class="r" style="left:1191px;top:459.8px;" width="10" height="6.6" viewBox="0 0 10 6.6"><path d="M1.15 1.15 L5.0 5.22 L8.85 1.15" fill="none" stroke="#a5adba" stroke-width="2.3" stroke-linecap="round" stroke-linejoin="round"/></svg>
<div class="r" style="left:1225px;top:443px;width:221px;height:40px;background:#fff;border:2px solid #738496;border-radius:4px;box-sizing:border-box;"></div>
<svg class="r" style="left:1238px;top:454px;" width="18" height="18" viewBox="0 0 18 18"><rect width="18" height="18" rx="2.6" fill="#ff991f"/><ellipse cx="8.9" cy="6.7" rx="3.1" ry="3.3" fill="none" stroke="#fff" stroke-width="1.8"/><path d="M6.7 10.2 H11 V12.2 a2 1.8 0 0 1 -4.3 0z" fill="#fff"/></svg>
<div class="t" style="left:1263.5px;top:454.77px;font-size:17.4px;color:#172b4d;-webkit-text-stroke-width:0;">Initiative</div>
<svg class="r" style="left:1417px;top:459.8px;" width="10" height="6.6" viewBox="0 0 10 6.6"><path d="M1.15 1.15 L5.0 5.22 L8.85 1.15" fill="none" stroke="#44546f" stroke-width="2.3" stroke-linecap="round" stroke-linejoin="round"/></svg>
<div class="r" style="left:1451px;top:443px;width:30px;height:40px;background:#f1f2f4;border-radius:4px;"></div>
<div class="r" style="left:1486px;top:443px;width:30px;height:40px;background:#f1f2f4;border-radius:4px;"></div>
<div class="r" style="left:1521px;top:443px;width:30px;height:40px;background:#f1f2f4;border-radius:4px;"></div>
<div class="r" style="left:1556px;top:443px;width:62px;height:40px;background:#f1f2f4;border-radius:4px;"></div>
<div class="r" style="left:1586px;top:443px;width:2px;height:40px;background:#738496;"></div>
<div class="r" style="left:1623px;top:443px;width:30px;height:40px;background:#f1f2f4;border-radius:4px;"></div>
<svg class="r" style="left:1451px;top:443px;" width="30" height="40" viewBox="0 0 30 40"><g fill="none" stroke="#172b4d" stroke-width="1.7"><rect x="12.3" y="13" width="5.6" height="3.6" rx="1.8"/><path d="M15.1 16.6 V19.9 M10.9 23.5 V19.9 H19.4 V23.5"/><rect x="8.2" y="23.6" width="5.6" height="3.6" rx="1.8"/><rect x="16.6" y="23.6" width="5.6" height="3.6" rx="1.8"/></g></svg>
<svg class="r" style="left:1486px;top:443px;" width="30" height="40" viewBox="0 0 30 40"><g fill="none" stroke="#172b4d" stroke-width="2"><path d="M10 23 V13.6 a1 1 0 0 1 1 -1 H17.6"/><rect x="12.8" y="15.6" width="8.6" height="11.2" rx="1.6"/></g></svg>
<svg class="r" style="left:1521px;top:443px;" width="30" height="40" viewBox="0 0 30 40"><g fill="none" stroke="#172b4d" stroke-width="2"><path d="M8.2 13.2 L14.2 19.4 a2 2 0 0 1 0.6 1.4 V27.2"/><path d="M17.4 18.2 L22.4 13.6"/></g><path d="M7 12.2 H12.2 L7 17.4z" fill="#172b4d"/></svg>
<svg class="r" style="left:1556px;top:443px;" width="30" height="40" viewBox="0 0 30 40"><path d="M15 15.6 V25.4 M9.9 20.4 L15 15.2 L20.1 20.4" fill="none" stroke="#172b4d" stroke-width="2"/></svg>
<svg class="r" style="left:1588px;top:443px;" width="30" height="40" viewBox="0 0 30 40"><path d="M15.1 14.6 V25 M9.9 20 L15.1 25.2 L20.3 20" fill="none" stroke="#172b4d" stroke-width="2"/></svg>
<svg class="r" style="left:1623px;top:443px;" width="30" height="40" viewBox="0 0 30 40"><g fill="#172b4d"><rect x="7.8" y="13.7" width="14" height="2.4" rx="1.2"/><rect x="12.2" y="12.9" width="4.8" height="2" rx="1"/><path d="M9 17.2 H21 L19.6 26.6 a1 1 0 0 1 -1 0.8 H11.2 a1 1 0 0 1 -1 -0.8z"/></g></svg>
<div class="r" style="left:215px;top:554px;width:1508px;height:1px;background:#dcdfe4;"></div>
<svg class="r" style="left:314.8px;top:516.2px;" width="10.3" height="6.7" viewBox="0 0 10.3 6.7"><path d="M1.3 1.3 L5.15 5.140000000000001 L9.0 1.3" fill="none" stroke="#172b4d" stroke-width="2.6" stroke-linecap="round" stroke-linejoin="round"/></svg>
<div class="r" style="left:341px;top:515px;width:18px;height:18px;background:#fff;border:2.4px solid #8590a2;border-radius:3.5px;box-sizing:border-box;"></div>
<div class="r" style="left:365px;top:514px;width:44px;height:20px;background:#f3f0ff;border-radius:3.5px;"></div>
<div class="t" style="left:370.09224155862165px;top:517.73px;font-size:14.5px;color:#5e4db2;font-weight:700;transform:scaleX(0.9762);">ND-4</div>
<svg class="r" style="left:483.2px;top:512.4px;" width="25" height="25" viewBox="0 0 25 25"><circle cx="12.5" cy="12.5" r="12.5" fill="#52d29a"/><path d="M8 12.8 L11.2 15.8 L17 9.8" fill="none" stroke="#fff" stroke-width="2.6" stroke-linecap="round" stroke-linejoin="round"/></svg>
<div class="t" style="left:516.0897364608512px;top:517.36px;font-size:18px;color:#0c66e4;transform:scaleX(1.0114);-webkit-text-stroke:0.25px #0c66e4;">Develop marketing strategy for product launch.</div>
<div class="r" style="left:999px;top:504px;width:221px;height:40px;background:#f7f8f9;border-radius:4px;"></div>
<svg class="r" style="left:1011px;top:514px;" width="20" height="20" viewBox="0 0 20 20"><defs><clipPath id="pc4"><rect x="10.2" y="0" width="10" height="20"/></clipPath></defs><rect width="20" height="20" fill="#ff5630"/><path d="M7.8 2.8 C5.4 3.8 4.4 6 4.4 8.2 C4.4 10.8 6.1 12.6 8.2 13.5 V20 H12.5 V13.5 C14.6 12.6 15.9 10.8 15.9 8.2 C15.9 6 14.9 3.8 12.4 2.8 V8.6 L10.1 9.8 L7.8 8.6 Z" fill="#e6f0f4"/><path d="M7.8 2.8 C5.4 3.8 4.4 6 4.4 8.2 C4.4 10.8 6.1 12.6 8.2 13.5 V20 H12.5 V13.5 C14.6 12.6 15.9 10.8 15.9 8.2 C15.9 6 14.9 3.8 12.4 2.8 V8.6 L10.1 9.8 L7.8 8.6 Z" fill="#b6cad5" clip-path="url(#pc4)"/><rect x="9.6" y="12" width="1.4" height="8" fill="#9fb3c0"/></svg>
<div class="t" style="left:1037.5px;top:515.77px;font-size:17.4px;color:#a5adba;-webkit-text-stroke-width:0;">Test project</div>
<svg class="r" style="left:1191px;top:520.8px;" width="10" height="6.6" viewBox="0 0 10 6.6"><path d="M1.15 1.15 L5.0 5.22 L8.85 1.15" fill="none" stroke="#a5adba" stroke-width="2.3" stroke-linecap="round" stroke-linejoin="round"/></svg>
<div class="r" style="left:1225px;top:504px;width:221px;height:40px;background:#fff;border:2px solid #738496;border-radius:4px;box-sizing:border-box;"></div>
<svg class="r" style="left:1238px;top:515px;" width="18" height="18" viewBox="0 0 18 18"><rect width="18" height="18" rx="2.6" fill="#904ee2"/><path d="M8.4 3.6 L4.9 10.3 H8.8 L8.9 14.6 L12.8 9.1 H9.2z" fill="#fff" stroke="#fff" stroke-width="0.6" stroke-linejoin="round"/></svg>
<div class="t" style="left:1263.5px;top:515.77px;font-size:17.4px;color:#172b4d;-webkit-text-stroke-width:0;">Epic</div>
<svg class="r" style="left:1417px;top:520.8px;" width="10" height="6.6" viewBox="0 0 10 6.6"><path d="M1.15 1.15 L5.0 5.22 L8.85 1.15" fill="none" stroke="#44546f" stroke-width="2.3" stroke-linecap="round" stroke-linejoin="round"/></svg>
<div class="r" style="left:1451px;top:504px;width:30px;height:40px;background:#f1f2f4;border-radius:4px;"></div>
<div class="r" style="left:1486px;top:504px;width:30px;height:40px;background:#f1f2f4;border-radius:4px;"></div>
<div class="r" style="left:1521px;top:504px;width:30px;height:40px;background:#f1f2f4;border-radius:4px;"></div>
<div class="r" style="left:1556px;top:504px;width:62px;height:40px;background:#f1f2f4;border-radius:4px;"></div>
<div class="r" style="left:1586px;top:504px;width:2px;height:40px;background:#738496;"></div>
<div class="r" style="left:1623px;top:504px;width:30px;height:40px;background:#f1f2f4;border-radius:4px;"></div>
<svg class="r" style="left:1451px;top:504px;" width="30" height="40" viewBox="0 0 30 40"><g fill="none" stroke="#172b4d" stroke-width="1.7"><rect x="12.3" y="13" width="5.6" height="3.6" rx="1.8"/><path d="M15.1 16.6 V19.9 M10.9 23.5 V19.9 H19.4 V23.5"/><rect x="8.2" y="23.6" width="5.6" height="3.6" rx="1.8"/><rect x="16.6" y="23.6" width="5.6" height="3.6" rx="1.8"/></g></svg>
<svg class="r" style="left:1486px;top:504px;" width="30" height="40" viewBox="0 0 30 40"><g fill="none" stroke="#172b4d" stroke-width="2"><path d="M10 23 V13.6 a1 1 0 0 1 1 -1 H17.6"/><rect x="12.8" y="15.6" width="8.6" height="11.2" rx="1.6"/></g></svg>
<svg class="r" style="left:1521px;top:504px;" width="30" height="40" viewBox="0 0 30 40"><g fill="none" stroke="#172b4d" stroke-width="2"><path d="M8.2 13.2 L14.2 19.4 a2 2 0 0 1 0.6 1.4 V27.2"/><path d="M17.4 18.2 L22.4 13.6"/></g><path d="M7 12.2 H12.2 L7 17.4z" fill="#172b4d"/></svg>
<svg class="r" style="left:1556px;top:504px;" width="30" height="40" viewBox="0 0 30 40"><path d="M15 15.6 V25.4 M9.9 20.4 L15 15.2 L20.1 20.4" fill="none" stroke="#172b4d" stroke-width="2"/></svg>
<svg class="r" style="left:1588px;top:504px;" width="30" height="40" viewBox="0 0 30 40"><path d="M15.1 14.6 V25 M9.9 20 L15.1 25.2 L20.3 20" fill="none" stroke="#172b4d" stroke-width="2"/></svg>
<svg class="r" style="left:1623px;top:504px;" width="30" height="40" viewBox="0 0 30 40"><g fill="#172b4d"><rect x="7.8" y="13.7" width="14" height="2.4" rx="1.2"/><rect x="12.2" y="12.9" width="4.8" height="2" rx="1"/><path d="M9 17.2 H21 L19.6 26.6 a1 1 0 0 1 -1 0.8 H11.2 a1 1 0 0 1 -1 -0.8z"/></g></svg>
<div class="r" style="left:215px;top:615px;width:1508px;height:1px;background:#dcdfe4;"></div>
<div class="r" style="left:371px;top:576px;width:18px;height:18px;background:#fff;border:2.4px solid #8590a2;border-radius:3.5px;box-sizing:border-box;"></div>
<div class="r" style="left:395px;top:575px;width:44px;height:20px;background:#f3f0ff;border-radius:3.5px;"></div>
<div class="t" style="left:400.09224155862165px;top:578.73px;font-size:14.5px;color:#5e4db2;font-weight:700;transform:scaleX(0.9762);">ND-5</div>
<svg class="r" style="left:483.2px;top:573.4px;" width="25" height="25" viewBox="0 0 25 25"><circle cx="12.5" cy="12.5" r="12.5" fill="#52d29a"/><path d="M8 12.8 L11.2 15.8 L17 9.8" fill="none" stroke="#fff" stroke-width="2.6" stroke-linecap="round" stroke-linejoin="round"/></svg>
<div class="t" style="left:516.0957424224555px;top:578.36px;font-size:18px;color:#0c66e4;transform:scaleX(1.0047);-webkit-text-stroke:0.25px #0c66e4;">Complete final review of marketing materials.</div>
<div class="r" style="left:999px;top:565px;width:221px;height:40px;background:#f7f8f9;border-radius:4px;"></div>
<svg class="r" style="left:1011px;top:575px;" width="20" height="20" viewBox="0 0 20 20"><defs><clipPath id="pc5"><rect x="10.2" y="0" width="10" height="20"/></clipPath></defs><rect width="20" height="20" fill="#ff5630"/><path d="M7.8 2.8 C5.4 3.8 4.4 6 4.4 8.2 C4.4 10.8 6.1 12.6 8.2 13.5 V20 H12.5 V13.5 C14.6 12.6 15.9 10.8 15.9 8.2 C15.9 6 14.9 3.8 12.4 2.8 V8.6 L10.1 9.8 L7.8 8.6 Z" fill="#e6f0f4"/><path d="M7.8 2.8 C5.4 3.8 4.4 6 4.4 8.2 C4.4 10.8 6.1 12.6 8.2 13.5 V20 H12.5 V13.5 C14.6 12.6 15.9 10.8 15.9 8.2 C15.9 6 14.9 3.8 12.4 2.8 V8.6 L10.1 9.8 L7.8 8.6 Z" fill="#b6cad5" clip-path="url(#pc5)"/><rect x="9.6" y="12" width="1.4" height="8" fill="#9fb3c0"/></svg>
<div class="t" style="left:1037.5px;top:576.77px;font-size:17.4px;color:#a5adba;-webkit-text-stroke-width:0;">Test project</div>
<svg class="r" style="left:1191px;top:581.8px;" width="10" height="6.6" viewBox="0 0 10 6.6"><path d="M1.15 1.15 L5.0 5.22 L8.85 1.15" fill="none" stroke="#a5adba" stroke-width="2.3" stroke-linecap="round" stroke-linejoin="round"/></svg>
<div class="r" style="left:1225px;top:565px;width:221px;height:40px;background:#fff;border:2px solid #738496;border-radius:4px;box-sizing:border-box;"></div>
<svg class="r" style="left:1238px;top:576px;" width="18" height="18" viewBox="0 0 18 18"><rect width="18" height="18" rx="2.6" fill="#4bade8"/><path d="M4.3 9.4 L7.5 12.7 L13.1 5.6" fill="none" stroke="#fff" stroke-width="2.3" stroke-linecap="round" stroke-linejoin="round"/></svg>
<div class="t" style="left:1263.5px;top:576.77px;font-size:17.4px;color:#172b4d;-webkit-text-stroke-width:0;">Task</div>
<svg class="r" style="left:1417px;top:581.8px;" width="10" height="6.6" viewBox="0 0 10 6.6"><path d="M1.15 1.15 L5.0 5.22 L8.85 1.15" fill="none" stroke="#44546f" stroke-width="2.3" stroke-linecap="round" stroke-linejoin="round"/></svg>
<div class="r" style="left:1451px;top:565px;width:30px;height:40px;background:#f1f2f4;border-radius:4px;"></div>
<div class="r" style="left:1486px;top:565px;width:30px;height:40px;background:#f1f2f4;border-radius:4px;"></div>
<div class="r" style="left:1521px;top:565px;width:30px;height:40px;background:#f1f2f4;border-radius:4px;"></div>
<div class="r" style="left:1556px;top:565px;width:62px;height:40px;background:#f1f2f4;border-radius:4px;"></div>
<div class="r" style="left:1586px;top:565px;width:2px;height:40px;background:#738496;"></div>
<div class="r" style="left:1623px;top:565px;width:30px;height:40px;background:#f1f2f4;border-radius:4px;"></div>
<svg class="r" style="left:1451px;top:565px;" width="30" height="40" viewBox="0 0 30 40"><g fill="none" stroke="#172b4d" stroke-width="1.7"><rect x="12.3" y="13" width="5.6" height="3.6" rx="1.8"/><path d="M15.1 16.6 V19.9 M10.9 23.5 V19.9 H19.4 V23.5"/><rect x="8.2" y="23.6" width="5.6" height="3.6" rx="1.8"/><rect x="16.6" y="23.6" width="5.6" height="3.6" rx="1.8"/></g></svg>
<svg class="r" style="left:1486px;top:565px;" width="30" height="40" viewBox="0 0 30 40"><g fill="none" stroke="#172b4d" stroke-width="2"><path d="M10 23 V13.6 a1 1 0 0 1 1 -1 H17.6"/><rect x="12.8" y="15.6" width="8.6" height="11.2" rx="1.6"/></g></svg>
<svg class="r" style="left:1521px;top:565px;" width="30" height="40" viewBox="0 0 30 40"><g fill="none" stroke="#172b4d" stroke-width="2"><path d="M8.2 13.2 L14.2 19.4 a2 2 0 0 1 0.6 1.4 V27.2"/><path d="M17.4 18.2 L22.4 13.6"/></g><path d="M7 12.2 H12.2 L7 17.4z" fill="#172b4d"/></svg>
<svg class="r" style="left:1556px;top:565px;" width="30" height="40" viewBox="0 0 30 40"><path d="M15 15.6 V25.4 M9.9 20.4 L15 15.2 L20.1 20.4" fill="none" stroke="#172b4d" stroke-width="2"/></svg>
<svg class="r" style="left:1588px;top:565px;" width="30" height="40" viewBox="0 0 30 40"><path d="M15.1 14.6 V25 M9.9 20 L15.1 25.2 L20.3 20" fill="none" stroke="#172b4d" stroke-width="2"/></svg>
<svg class="r" style="left:1623px;top:565px;" width="30" height="40" viewBox="0 0 30 40"><g fill="#172b4d"><rect x="7.8" y="13.7" width="14" height="2.4" rx="1.2"/><rect x="12.2" y="12.9" width="4.8" height="2" rx="1"/><path d="M9 17.2 H21 L19.6 26.6 a1 1 0 0 1 -1 0.8 H11.2 a1 1 0 0 1 -1 -0.8z"/></g></svg>
<div class="r" style="left:215px;top:676px;width:1508px;height:1px;background:#dcdfe4;"></div>
<div class="r" style="left:281px;top:637px;width:18px;height:18px;background:#fff;border:2.4px solid #8590a2;border-radius:3.5px;box-sizing:border-box;"></div>
<div class="r" style="left:305px;top:636px;width:44px;height:20px;background:#f3f0ff;border-radius:3.5px;"></div>
<div class="t" style="left:310.09224155862165px;top:639.73px;font-size:14.5px;color:#5e4db2;font-weight:700;transform:scaleX(0.9762);">ND-6</div>
<svg class="r" style="left:483.2px;top:634.4px;" width="25" height="25" viewBox="0 0 25 25"><circle cx="12.5" cy="12.5" r="12.5" fill="#52d29a"/><path d="M8 12.8 L11.2 15.8 L17 9.8" fill="none" stroke="#fff" stroke-width="2.6" stroke-linecap="round" stroke-linejoin="round"/></svg>
<div class="t" style="left:516.093454298551px;top:639.36px;font-size:18px;color:#0c66e4;transform:scaleX(1.0073);-webkit-text-stroke:0.25px #0c66e4;">Define department goals</div>
<div class="r" style="left:999px;top:626px;width:221px;height:40px;background:#f7f8f9;border-radius:4px;"></div>
<svg class="r" style="left:1011px;top:636px;" width="20" height="20" viewBox="0 0 20 20"><defs><clipPath id="pc6"><rect x="10.2" y="0" width="10" height="20"/></clipPath></defs><rect width="20" height="20" fill="#ff5630"/><path d="M7.8 2.8 C5.4 3.8 4.4 6 4.4 8.2 C4.4 10.8 6.1 12.6 8.2 13.5 V20 H12.5 V13.5 C14.6 12.6 15.9 10.8 15.9 8.2 C15.9 6 14.9 3.8 12.4 2.8 V8.6 L10.1 9.8 L7.8 8.6 Z" fill="#e6f0f4"/><path d="M7.8 2.8 C5.4 3.8 4.4 6 4.4 8.2 C4.4 10.8 6.1 12.6 8.2 13.5 V20 H12.5 V13.5 C14.6 12.6 15.9 10.8 15.9 8.2 C15.9 6 14.9 3.8 12.4 2.8 V8.6 L10.1 9.8 L7.8 8.6 Z" fill="#b6cad5" clip-path="url(#pc6)"/><rect x="9.6" y="12" width="1.4" height="8" fill="#9fb3c0"/></svg>
<div class="t" style="left:1037.5px;top:637.77px;font-size:17.4px;color:#a5adba;-webkit-text-stroke-width:0;">Test project</div>
<svg class="r" style="left:1191px;top:642.8px;" width="10" height="6.6" viewBox="0 0 10 6.6"><path d="M1.15 1.15 L5.0 5.22 L8.85 1.15" fill="none" stroke="#a5adba" stroke-width="2.3" stroke-linecap="round" stroke-linejoin="round"/></svg>
<div class="r" style="left:1225px;top:626px;width:221px;height:40px;background:#fff;border:2px solid #738496;border-radius:4px;box-sizing:border-box;"></div>
<svg class="r" style="left:1237px;top:636px;" width="20" height="20" viewBox="0 0 20 20"><rect width="20" height="20" rx="3.2" fill="#2684ff"/><circle cx="9.9" cy="6.5" r="2.8" fill="#fff"/><rect x="5.6" y="9.9" width="8.4" height="6.2" rx="2" fill="#fff"/></svg>
<div class="t" style="left:1263.5px;top:637.77px;font-size:17.4px;color:#172b4d;-webkit-text-stroke-width:0;">Departments</div>
<svg class="r" style="left:1417px;top:642.8px;" width="10" height="6.6" viewBox="0 0 10 6.6"><path d="M1.15 1.15 L5.0 5.22 L8.85 1.15" fill="none" stroke="#44546f" stroke-width="2.3" stroke-linecap="round" stroke-linejoin="round"/></svg>
<div class="r" style="left:1451px;top:626px;width:30px;height:40px;background:#f1f2f4;border-radius:4px;"></div>
<div class="r" style="left:1486px;top:626px;width:30px;height:40px;background:#f1f2f4;border-radius:4px;"></div>
<div class="r" style="left:1521px;top:626px;width:30px;height:40px;background:#f1f2f4;border-radius:4px;"></div>
<div class="r" style="left:1556px;top:626px;width:62px;height:40px;background:#f1f2f4;border-radius:4px;"></div>
<div class="r" style="left:1586px;top:626px;width:2px;height:40px;background:#738496;"></div>
<div class="r" style="left:1623px;top:626px;width:30px;height:40px;background:#f1f2f4;border-radius:4px;"></div>
<svg class="r" style="left:1451px;top:626px;" width="30" height="40" viewBox="0 0 30 40"><g fill="none" stroke="#172b4d" stroke-width="1.7"><rect x="12.3" y="13" width="5.6" height="3.6" rx="1.8"/><path d="M15.1 16.6 V19.9 M10.9 23.5 V19.9 H19.4 V23.5"/><rect x="8.2" y="23.6" width="5.6" height="3.6" rx="1.8"/><rect x="16.6" y="23.6" width="5.6" height="3.6" rx="1.8"/></g></svg>
<svg class="r" style="left:1486px;top:626px;" width="30" height="40" viewBox="0 0 30 40"><g fill="none" stroke="#172b4d" stroke-width="2"><path d="M10 23 V13.6 a1 1 0 0 1 1 -1 H17.6"/><rect x="12.8" y="15.6" width="8.6" height="11.2" rx="1.6"/></g></svg>
<svg class="r" style="left:1521px;top:626px;" width="30" height="40" viewBox="0 0 30 40"><g fill="none" stroke="#172b4d" stroke-width="2"><path d="M8.2 13.2 L14.2 19.4 a2 2 0 0 1 0.6 1.4 V27.2"/><path d="M17.4 18.2 L22.4 13.6"/></g><path d="M7 12.2 H12.2 L7 17.4z" fill="#172b4d"/></svg>
<svg class="r" style="left:1556px;top:626px;" width="30" height="40" viewBox="0 0 30 40"><path d="M15 15.6 V25.4 M9.9 20.4 L15 15.2 L20.1 20.4" fill="none" stroke="#172b4d" stroke-width="2"/></svg>
<svg class="r" style="left:1588px;top:626px;" width="30" height="40" viewBox="0 0 30 40"><path d="M15.1 14.6 V25 M9.9 20 L15.1 25.2 L20.3 20" fill="none" stroke="#172b4d" stroke-width="2"/></svg>
<svg class="r" style="left:1623px;top:626px;" width="30" height="40" viewBox="0 0 30 40"><g fill="#172b4d"><rect x="7.8" y="13.7" width="14" height="2.4" rx="1.2"/><rect x="12.2" y="12.9" width="4.8" height="2" rx="1"/><path d="M9 17.2 H21 L19.6 26.6 a1 1 0 0 1 -1 0.8 H11.2 a1 1 0 0 1 -1 -0.8z"/></g></svg>
</body></html>
